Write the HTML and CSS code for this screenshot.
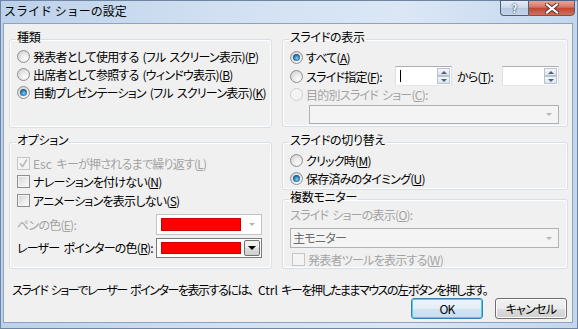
FILE: index.html
```html
<!DOCTYPE html>
<html lang="ja">
<head>
  <meta charset="UTF-8" />
  <title>スライド ショーの設定</title>
  <link rel="stylesheet" href="styles.css">
</head>
<body>
  <div class="window">
    <div class="titlebar">
      <span class="title">スライド ショーの設定</span>
      <div class="caption">
        <span class="cap help">?</span>
        <span class="cap close">
          <svg width="14" height="11" viewBox="0 0 14 11">
            <path d="M2 1.5 L12 9.5 M12 1.5 L2 9.5" stroke="#5a2a24" stroke-width="4" stroke-linecap="square" />
            <path d="M2 1.5 L12 9.5 M12 1.5 L2 9.5" stroke="#fff" stroke-width="2.2" stroke-linecap="square" />
          </svg>
        </span>
      </div>
    </div>

    <div class="client">
      <div class="columns">
        <div class="col">
          <fieldset class="group g-type">
            <legend>種類</legend>
            <div class="row"><span class="radio"></span>発表者として使用する (フル スクリーン表示)(<u>P</u>)</div>
            <div class="row"><span class="radio"></span>出席者として参照する (ウィンドウ表示)(<u>B</u>)</div>
            <div class="row"><span class="radio on"></span>自動プレゼンテーション (フル スクリーン表示)(<u>K</u>)</div>
          </fieldset>

          <fieldset class="group g-options">
            <legend>オプション</legend>
            <div class="row opt disabled">
              <span class="check off">
                <svg width="11" height="11" viewBox="0 0 11 11"><path d="M2 5.5 L4.5 8.5 L9 1.5" fill="none" stroke="#b8b8b8" stroke-width="1.6" /></svg>
              </span><span class="latin">Esc&nbsp;</span>キーが押されるまで繰り返す(<u>L</u>)
            </div>
            <div class="row opt"><span class="check"></span>ナレーションを付けない(<u>N</u>)</div>
            <div class="row opt"><span class="check"></span>アニメーションを表示しない(<u>S</u>)</div>

            <div class="color-row pen disabled">
              <span>ペンの色(<u>E</u>):</span>
              <span class="color-combo off">
                <span class="swatch"></span>
                <span class="drop off"><span class="arrow"></span></span>
              </span>
            </div>
            <div class="color-row laser">
              <span>レーザー ポインターの色(<u>R</u>):</span>
              <span class="color-combo">
                <span class="swatch"></span>
                <span class="drop"><span class="arrow"></span></span>
              </span>
            </div>
          </fieldset>
        </div>

        <div class="col">
          <fieldset class="group g-show">
            <legend>スライドの表示</legend>
            <div class="row"><span class="radio on"></span>すべて(<u>A</u>)</div>
            <div class="row range">
              <span class="radio"></span>
              <span class="range-from">スライド指定(<u>F</u>):</span>
              <span class="spin">
                <span class="spin-text"><span class="caret"></span></span>
                <span class="spin-btns"><span class="up"></span><span class="down"></span></span>
              </span>
              <span class="range-to">から(<u>T</u>):</span>
              <span class="spin">
                <span class="spin-text"></span>
                <span class="spin-btns"><span class="up"></span><span class="down"></span></span>
              </span>
            </div>
            <div class="row custom disabled"><span class="radio off"></span>目的別スライド ショー(<u>C</u>):</div>
            <div class="combo custom-combo off">
              <span class="combo-text"></span>
              <span class="drop off"><span class="arrow"></span></span>
            </div>
          </fieldset>

          <fieldset class="group g-advance">
            <legend>スライドの切り替え</legend>
            <div class="row"><span class="radio"></span>クリック時(<u>M</u>)</div>
            <div class="row"><span class="radio on"></span>保存済みのタイミング(<u>U</u>)</div>
          </fieldset>

          <fieldset class="group g-monitor">
            <legend>複数モニター</legend>
            <div class="label disabled">スライド ショーの表示(<u>O</u>):</div>
            <div class="combo monitor-combo off">
              <span class="combo-text">主モニター</span>
              <span class="drop off"><span class="arrow"></span></span>
            </div>
            <div class="row presenter disabled"><span class="check off"></span>発表者ツールを表示する(<u>W</u>)</div>
          </fieldset>
        </div>
      </div>

      <p class="hint">スライド ショーでレーザー ポインターを表示するには<span class="punct">、</span><span class="latin">Ctrl</span> キーを押したままマウスの左ボタンを押します。</p>

      <div class="buttons">
        <button class="btn default">OK</button>
        <button class="btn">キャンセル</button>
      </div>
    </div>
  </div>
</body>
</html>
```

FILE: styles.css
```css
html, body {
  margin: 0;
  height: 100%;
  overflow: hidden;
}
body {
  font-family: "Noto Sans CJK JP", "Noto Sans", sans-serif;
  font-size: 12px;
  color: #000;
}
u {
  text-decoration-thickness: 1px;
  text-underline-offset: 1px;
}

/* window frame */
.window {
  box-sizing: border-box;
  width: 578px;
  height: 329px;
  border: 1px solid #6f85a3;
  background: linear-gradient(to right, #bcd1ea 0%, #d2e1f2 40%, #dbe7f5 70%, #c3d6ed 100%);
  display: flex;
  flex-direction: column;
  padding: 0 4px 5px 2px;
}
.titlebar {
  height: 22px;
  display: flex;
  align-items: flex-start;
  flex: none;
}
.title {
  line-height: 20px;
  padding-left: 1px;
}
.caption {
  margin-left: auto;
  display: flex;
  margin-top: -1px;
  margin-right: -2px;
}
.cap {
  height: 16px;
  box-sizing: border-box;
  border: 1px solid #4d5f7a;
  display: flex;
  align-items: center;
  justify-content: center;
}
.help {
  width: 28px;
  border-right: none;
  border-radius: 0 0 0 4px;
  background: linear-gradient(#e3ecf6, #c9d8ea 50%, #b6c9e1 51%, #c4d6ea);
  color: #f4f8fc;
  font-weight: bold;
  font-size: 11px;
  text-shadow: 0 0 2px #3b4c66, 0 0 1px #3b4c66;
}
.close {
  width: 47px;
  border-radius: 0 0 4px 0;
  background: linear-gradient(#e8a597, #d47565 45%, #c2432f 50%, #d3705c 100%);
}

/* client area */
.client {
  flex: 1;
  background: #f0f0f0;
  border: 1px solid #8ea3bf;
  padding: 7px 4px 0 5px;
  overflow: hidden;
}
.columns {
  display: flex;
  gap: 10px;
}
.col {
  display: flex;
  flex-direction: column;
}
.col:first-child { width: 263px; }
.col:last-child { width: 286px; }

.group {
  box-sizing: border-box;
  margin: 0;
  padding: 0 0 0 7px;
  min-width: 0;
  border: 1px solid #d5dfe5;
  border-radius: 3px;
  box-shadow: inset 0 0 0 1px #fff;
}
.group legend {
  padding: 0 1px 5px;
  margin-left: -1px;
  line-height: 12px;
  font-feature-settings: "palt";
  letter-spacing: -0.3px;
}
.g-type { height: 97px; }
.g-options { height: 135px; margin-top: 6px; }
.g-show { height: 96px; }
.g-advance { height: 56px; margin-top: 7px; }
.g-monitor { height: 78px; margin-top: 1px; }

.row, .label, .color-row, .combo-text, .btn {
  font-feature-settings: "palt";
  letter-spacing: -0.75px;
  word-spacing: 2px;
}
.row {
  display: flex;
  align-items: center;
  height: 18px;
  white-space: pre;
}
.g-type .row:first-of-type { margin-top: -1px; }
.disabled { color: #a3a3a3; }
.latin { letter-spacing: 0; }

/* radio buttons and checkboxes */
.radio, .check {
  flex: none;
  box-sizing: border-box;
  width: 13px;
  height: 13px;
  margin-right: 3px;
  position: relative;
  border: 1px solid #8e8f8f;
}
.radio {
  border-radius: 50%;
  background: radial-gradient(circle at 65% 70%, #fdfdfd 0, #ededed 35%, #c9c9c9 100%);
}
.radio.on::after {
  content: "";
  position: absolute;
  left: 2px;
  top: 2px;
  width: 7px;
  height: 7px;
  border-radius: 50%;
  background: radial-gradient(circle at 55% 60%, #8dd3f7 0, #3d8fc7 35%, #0f4472 80%);
}
.radio.off {
  border-color: #cfcfcf;
  background: #f4f4f4;
}
.check {
  background: linear-gradient(135deg, #d3d3d3, #f7f7f7 80%);
  box-shadow: inset 0 0 0 1px #f4f4f4;
}
.check.off {
  border-color: #c6c6c6;
  background: #f4f4f4;
  box-shadow: none;
}
.check svg { display: block; }

/* options group */
.opt { height: 18.5px; }
.opt.disabled { white-space: normal; }
.g-options .opt:first-of-type { margin-top: 3px; }
.color-row {
  display: grid;
  grid-template-columns: 139px 106px;
  align-items: center;
  white-space: nowrap;
}
.color-row.pen { height: 21px; margin-top: 4px; }
.color-row.laser { height: 20px; margin-top: 3px; }
.color-combo {
  box-sizing: border-box;
  height: 100%;
  border: 1px solid #7a7a7a;
  background: #fff;
  display: flex;
  align-items: stretch;
  padding: 3px 1px 3px 4px;
}
.color-combo.off { border-color: #c4c4c4; }
.swatch {
  width: 80px;
  background: #f00;
  box-shadow: inset 0 0 0 1px #d00000;
}
.color-combo .drop {
  margin: -2px 0 -2px auto;
  width: 16px;
}

/* drop-down buttons */
.drop {
  box-sizing: border-box;
  border: 1px solid #707070;
  border-radius: 2px;
  background: linear-gradient(#f2f2f2, #ebebeb 50%, #dddddd 51%, #cfcfcf);
  display: flex;
  align-items: center;
  justify-content: center;
}
.arrow {
  width: 0;
  height: 0;
  border-left: 4px solid transparent;
  border-right: 4px solid transparent;
  border-top: 4px solid #000;
}
.drop.off {
  border-color: transparent;
  background: none;
}
.drop.off .arrow {
  border-left-width: 3px;
  border-right-width: 3px;
  border-top: 3px solid #b5b5b5;
}

/* slide range row */
.range { height: 20px; white-space: nowrap; }
.range-from { width: 89px; }
.spin {
  display: flex;
  height: 20px;
  box-sizing: border-box;
  border: 1px solid #abadb3;
  border-left-color: #dbdfe6;
  border-right-color: #dbdfe6;
  border-bottom-color: #e3e9ef;
  background: #fff;
  width: 57px;
}
.spin-text {
  flex: 1;
  position: relative;
}
.caret {
  position: absolute;
  left: 4px;
  top: 3px;
  width: 1px;
  height: 12px;
  background: #000;
}
.spin-btns {
  width: 14px;
  display: flex;
  flex-direction: column;
  padding: 1px 1px 1px 0;
  box-sizing: border-box;
}
.spin-btns span {
  flex: 1;
  border: 1px solid #b9c3cf;
  background: linear-gradient(#f5f7f9, #dfe4ea);
  display: flex;
  align-items: center;
  justify-content: center;
}
.spin-btns span::after {
  content: "";
  border-left: 3px solid transparent;
  border-right: 3px solid transparent;
}
.spin-btns .up::after { border-bottom: 3px solid #4d6185; }
.spin-btns .down::after { border-top: 3px solid #4d6185; }
.range-to {
  width: 45px;
  margin-left: 5px;
}

.custom { height: 17px; }

/* combo boxes */
.combo {
  box-sizing: border-box;
  display: flex;
  border: 1px solid #adb2b5;
  background: #f4f4f4;
  padding: 1px;
}
.combo-text {
  flex: 1;
  padding-left: 1px;
  color: #6d6d6d;
  line-height: 16px;
}
.combo .drop { width: 16px; }
.custom-combo {
  height: 19px;
  width: 250px;
  margin: 2px 0 0 19px;
}

.label {
  line-height: 16px;
  margin-top: -1px;
}
.monitor-combo {
  height: 20px;
  width: 269px;
  margin-top: 5px;
}
.presenter {
  height: 16px;
  margin-top: 3px;
  padding-left: 2px;
}

/* footer */
.hint {
  margin: 13px 0 0 3px;
  line-height: 16px;
  white-space: nowrap;
  font-feature-settings: "palt";
  letter-spacing: -1.45px;
  word-spacing: 2px;
}
.hint .punct {
  font-feature-settings: normal;
  letter-spacing: -2px;
}
.buttons {
  display: flex;
  justify-content: flex-end;
  gap: 12px;
  padding-right: 1px;
}
.btn {
  width: 72px;
  height: 21px;
  padding: 0;
  font-family: inherit;
  font-size: 12px;
  color: #000;
  border: 1px solid #707070;
  border-radius: 3px;
  background: linear-gradient(#f2f2f2, #ebebeb 50%, #dddddd 51%, #cfcfcf);
  box-shadow: inset 0 0 0 1px #fcfcfc;
}
.btn.default {
  border-color: #3c7fb1;
  background: linear-gradient(#eef5fa, #e4eef6 50%, #d3e3f0 51%, #c9ddee);
  box-shadow: inset 0 0 0 1px #48d0f8;
}
```
